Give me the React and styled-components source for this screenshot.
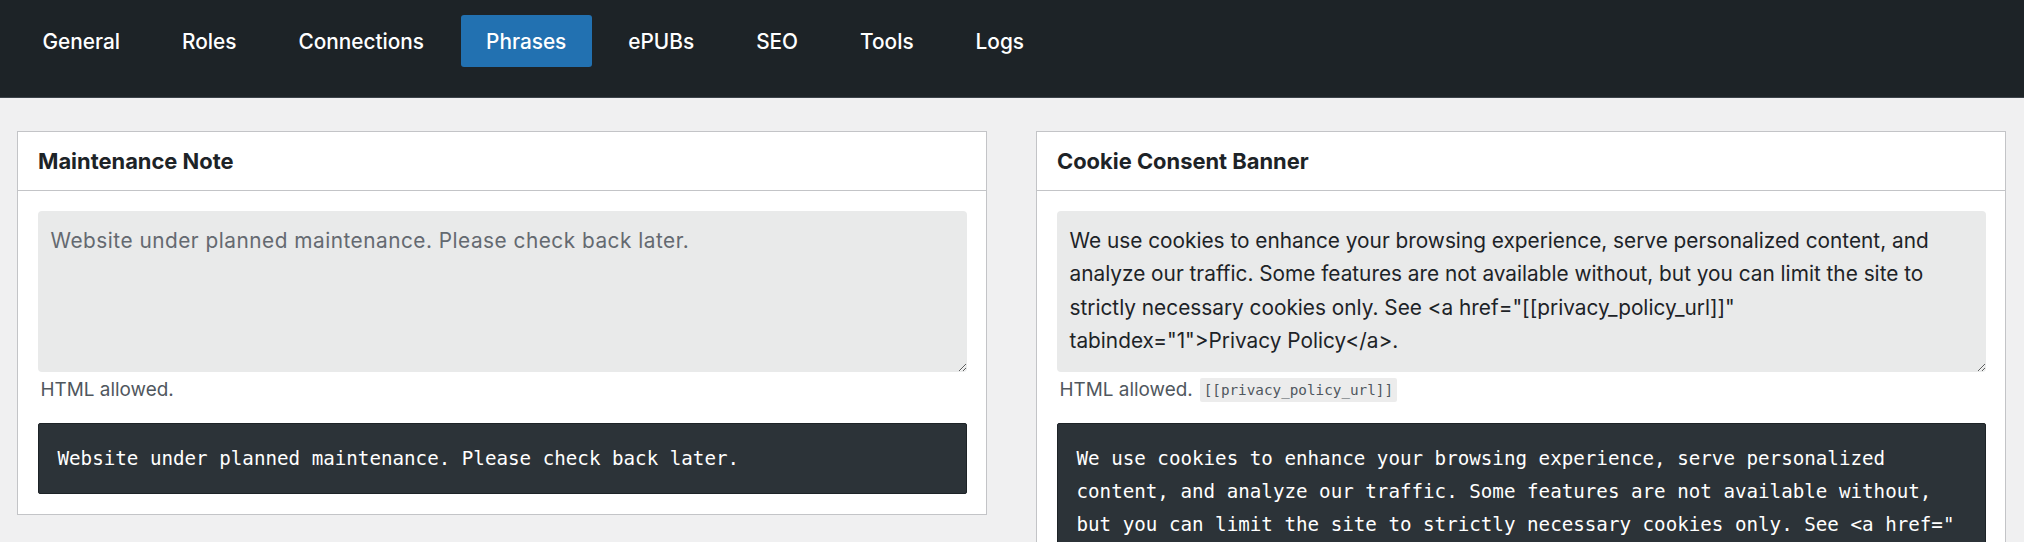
import React from 'react';
import styled, { createGlobalStyle } from 'styled-components';

const GlobalStyle = createGlobalStyle`
  html, body {
    margin: 0;
    padding: 0;
    background: #f0f0f1;
    font-family: Inter, "Liberation Sans", sans-serif;
    color: #1d2327;
  }
`;

const TopBar = styled.nav`
  display: flex;
  align-items: flex-start;
  gap: 11px;
  height: 98px;
  box-sizing: border-box;
  padding: 15px 17px 0;
  background: #1d2327;
  border-bottom: 1px solid #3c434a;
`;

const Tab = styled.a`
  display: flex;
  align-items: center;
  height: 52px;
  padding: 0 25.5px;
  border-radius: 3px;
  font-size: 20.8px;
  font-weight: 500;
  color: #fff;
  text-decoration: none;
  background: ${(p) => (p.$active ? '#2271b1' : 'transparent')};
  cursor: pointer;
`;

const Main = styled.main`
  display: grid;
  grid-template-columns: 1fr 1fr;
  gap: 49px;
  padding: 33px 18px 34px 17px;
  align-items: start;
`;

const Panel = styled.section`
  background: #fff;
  border: 1px solid #c3c4c7;
`;

const PanelHead = styled.header`
  display: flex;
  align-items: center;
  height: 58px;
  padding: 0 20px;
  border-bottom: 1px solid #c3c4c7;
`;

const PanelTitle = styled.h2`
  margin: 0;
  font-size: 21.9px;
  font-weight: 650;
  color: #1d2327;
`;

const PanelBody = styled.div`
  padding: 20px 19.5px 20px;
`;

const Editor = styled.textarea`
  display: block;
  width: 100%;
  height: 161px;
  box-sizing: border-box;
  margin: 0;
  padding: 13px 13px;
  border: 0;
  border-radius: 4px;
  background: #e9eaea;
  color: #1d2327;
  font-family: Inter, "Liberation Sans", sans-serif;
  font-size: 20.8px;
  line-height: 33.3px;
  resize: vertical;
  outline: none;
  &::placeholder {
    color: #646970;
    letter-spacing: 0.5px;
  }
`;

const Hint = styled.p`
  display: flex;
  align-items: center;
  gap: 7px;
  margin: 5px 0 0 3px;
  min-height: 26px;
  font-size: 18.9px;
  line-height: 26px;
  color: #50575e;
`;

const Token = styled.code`
  padding: 2px 4px;
  border-radius: 2px;
  background: #ececec;
  color: #50575e;
  font-family: "DejaVu Sans Mono", "Liberation Mono", monospace;
  font-size: 14.3px;
  line-height: 20px;
`;

const Preview = styled.pre`
  margin: 20px 0 0;
  padding: 18px 19px;
  border: 1px solid #1d2327;
  border-radius: 2px;
  background: #2c3338;
  color: #fff;
  font-family: "DejaVu Sans Mono", "Liberation Mono", monospace;
  font-size: 19.2px;
  line-height: 33px;
  white-space: pre-wrap;
`;

const maintenance = 'Website under planned maintenance. Please check back later.';
const cookieText = 'We use cookies to enhance your browsing experience, serve personalized content, and analyze our traffic. Some features are not available without, but you can limit the site to strictly necessary cookies only. See <a href="[[privacy_policy_url]]"\ntabindex="1">Privacy Policy</a>.';

const tabs = ['General', 'Roles', 'Connections', 'Phrases', 'ePUBs', 'SEO', 'Tools', 'Logs'];

const App = () => (
  <>
    <GlobalStyle />
    <TopBar>
      {tabs.map((t) => (
        <Tab key={t} $active={t === 'Phrases'}>{t}</Tab>
      ))}
    </TopBar>
    <Main>
      <Panel>
        <PanelHead>
          <PanelTitle>Maintenance Note</PanelTitle>
        </PanelHead>
        <PanelBody>
          <Editor readOnly placeholder={maintenance} value="" />
          <Hint>HTML allowed.</Hint>
          <Preview>{maintenance}</Preview>
        </PanelBody>
      </Panel>
      <Panel>
        <PanelHead>
          <PanelTitle>Cookie Consent Banner</PanelTitle>
        </PanelHead>
        <PanelBody>
          <Editor readOnly value={cookieText} />
          <Hint>
            HTML allowed.
            <Token>[[privacy_policy_url]]</Token>
          </Hint>
          <Preview>
            We use cookies to enhance your browsing experience, serve personalized content, and analyze our traffic. Some features are not available without, but you can limit the site to strictly necessary cookies only. See &lt;a href=&quot;
            <wbr />
            [[privacy_policy_url]]&quot;{'\n'}tabindex=&quot;1&quot;&gt;Privacy Policy&lt;/a&gt;.
          </Preview>
        </PanelBody>
      </Panel>
    </Main>
  </>
);

export default App;
